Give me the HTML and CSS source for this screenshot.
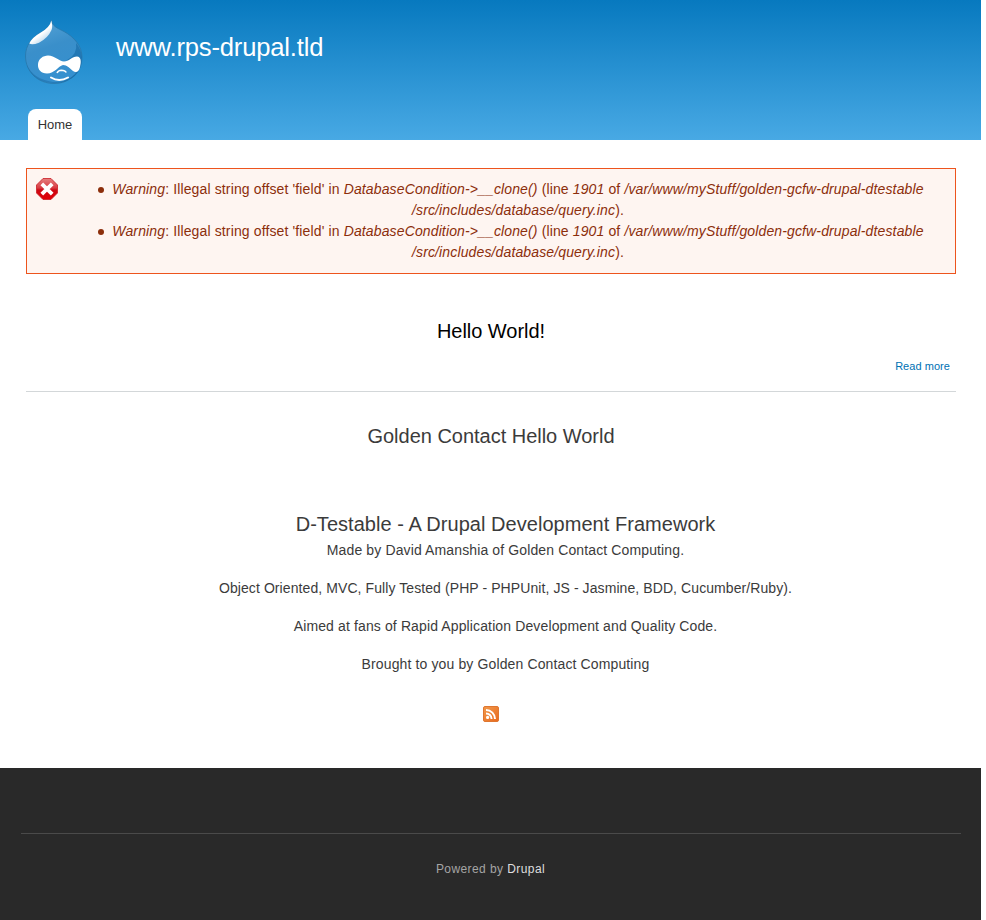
FILE: index.html
```html
<!DOCTYPE html>
<html lang="en">
<head>
<meta charset="utf-8">
<title>www.rps-drupal.tld</title>
<link rel="stylesheet" href="styles.css">
</head>
<body>
<div class="page">
  <header class="header">
    <div class="branding">
      <svg class="logo" viewBox="0 0 60 68" width="60" height="68">
        <defs>
          <linearGradient id="drop" x1="0" y1="0" x2="0.3" y2="1">
            <stop offset="0" stop-color="#5aa6d8"/><stop offset=".5" stop-color="#3a8fca"/><stop offset="1" stop-color="#3590cf"/>
          </linearGradient>
          <linearGradient id="shine" x1="0" y1="0" x2=".75" y2="1">
            <stop offset="0" stop-color="#fff"/><stop offset=".6" stop-color="#fff"/><stop offset="1" stop-color="#fff" stop-opacity=".5"/>
          </linearGradient>
        </defs>
        <path d="M27.500 2C28 8 33 10 40 13.500C50 19 58 28 58 39C58 54 46 65.500 30 65.500C14 65.500 1.500 54 1.500 38C1.500 27 8 20 16 15C23 11 27 8 27.500 2Z" fill="url(#drop)" stroke="#2877ab" stroke-width=".8"/>
        <path d="M52 25Q54 36 43 42Q52 48 55 51Q47 64 31 65Q58 63 58 39Q57 31 52 25Z" fill="#176ca8" opacity=".65"/>
        <path d="M3 47Q9 61 29 64Q47 64 55 51Q47 66 29 65Q9 64 3 47Z" fill="#17679f" opacity=".45"/>
        <path d="M27.300 2.500Q26 9.500 16 15Q8 19.500 5.300 25.500Q8 27.500 15 24.700Q24 20 27.500 12Q29 9 27.300 2.500Z" fill="url(#shine)"/>
        <path d="M24 37.500C31 37.500 35 43.500 40 43.500C45 43.500 48 38.500 53 38.500C57 39 57.500 43 56 49C55 54 52 55 49 53C46 50.500 43 47 39 47C34 48 31 55.500 23 55.500C17 55.500 13.500 51.500 14 46C14.500 41 19 37.500 24 37.500Z" fill="#fff"/>
        <path d="M33 55Q34 52.300 37.500 52.200Q41 52.200 42.300 54.500" fill="none" stroke="#fff" stroke-width="1.500"/>
        <path d="M27 59.500Q35 64.500 44 59.500" fill="none" stroke="#fff" stroke-width="2" stroke-linecap="round"/>
      </svg>
      <a class="site-name">www.rps-drupal.tld</a>
    </div>
    <nav class="menu"><a class="tab">Home</a></nav>
  </header>
  <main class="main">
    <div class="messages">
      <svg class="error-icon" viewBox="0 0 22 22" width="22" height="22">
        <defs><linearGradient id="err" x1="0" y1="0" x2="0" y2="1"><stop offset="0" stop-color="#e58080"/><stop offset=".45" stop-color="#d83b42"/><stop offset=".55" stop-color="#cc0813"/><stop offset="1" stop-color="#e30008"/></linearGradient></defs>
        <path d="M7 .5H15L21.500 7V15L15 21.500H7L.5 15V7Z" fill="url(#err)" stroke="#c91c24" stroke-width=".8"/>
        <path d="M5.800 5.800L16.200 16.200M16.200 5.800L5.800 16.200" stroke="#fff" stroke-width="3.800"/>
      </svg>
      <ul class="warnings">
        <li><em>Warning</em>: Illegal string offset 'field' in <em>DatabaseCondition-&gt;__clone()</em> (line <em>1901</em> of <em>/var/www/myStuff/golden-gcfw-drupal-dtestable<br>/src/includes/database/query.inc</em>).</li>
        <li><em>Warning</em>: Illegal string offset 'field' in <em>DatabaseCondition-&gt;__clone()</em> (line <em>1901</em> of <em>/var/www/myStuff/golden-gcfw-drupal-dtestable<br>/src/includes/database/query.inc</em>).</li>
      </ul>
    </div>
    <article class="node">
      <h2 class="node-title">Hello World!</h2>
      <div class="links"><a class="more">Read more</a></div>
    </article>
    <h2 class="subtitle">Golden Contact Hello World</h2>
    <section class="about">
      <h2 class="about-title">D-Testable - A Drupal Development Framework</h2>
      <p>Made by David Amanshia of Golden Contact Computing.</p>
      <p class="features">Object Oriented, MVC, Fully Tested (PHP - PHPUnit, JS - Jasmine, BDD, Cucumber/Ruby).</p>
      <p>Aimed at fans of Rapid Application Development and Quality Code.</p>
      <p>Brought to you by Golden Contact Computing</p>
    </section>
    <svg class="feed" viewBox="0 0 16 16" width="16" height="16">
      <defs><linearGradient id="rss" x1="0" y1="0" x2="1" y2="1"><stop offset="0" stop-color="#f19a4b"/><stop offset="1" stop-color="#e9691d"/></linearGradient></defs>
      <rect x=".5" y=".5" width="15" height="15" rx="1.500" fill="url(#rss)" stroke="#df7630"/>
      <circle cx="4.600" cy="11.400" r="1.600" fill="#fff"/>
      <path d="M3 7.400A5.600 5.600 0 0 1 8.600 13M3 4A9 9 0 0 1 12 13" fill="none" stroke="#fff" stroke-width="2"/>
    </svg>
  </main>
  <footer class="footer">
    <div class="credit">Powered by <a>Drupal</a></div>
  </footer>
</div>
</body>
</html>
```
FILE: styles.css
```css
* { box-sizing: border-box; }
body { margin: 0; background: #fff; color: #3b3b3b; font: 14px/21px "Liberation Sans", Arial, sans-serif; }
h2, p, ul { margin: 0; padding: 0; font-weight: normal; }
.page { width: 981px; height: 920px; display: flex; flex-direction: column; overflow: hidden; }
.header { height: 140px; display: flex; flex-direction: column; justify-content: space-between; background: linear-gradient(#0779bf, #48a9e4); }
.branding { display: flex; padding: 18px 0 0 24px; }
.logo { display: block; }
.site-name { margin: 14px 0 0 32px; color: #fff; font-size: 25.600px; line-height: 30px; letter-spacing: -.18px; }
.menu { display: flex; padding-left: 28px; }
.tab { width: 54px; height: 31px; border-radius: 8px 8px 0 0; background: #fff; color: #333; font-size: 13px; line-height: 31px; text-align: center; }
.main { height: 628px; padding: 28px 25px 0 26px; display: flex; flex-direction: column; text-align: center; }
.messages { display: flex; height: 106px; border: 1px solid #ed541d; background: #fef5f1; color: #8c2e0b; padding: 9px; }
.error-icon { flex: none; }
.warnings { width: 812px; margin: 1px 0 0 54px; list-style: none; letter-spacing: .13px; white-space: nowrap; }
.warnings li { position: relative; }
.warnings li::before { content: ""; position: absolute; left: -14px; top: 8px; width: 6px; height: 6px; border-radius: 50%; background: #8c2e0b; }
.node { height: 118px; border-bottom: 1px solid #d3d7d9; padding-top: 45px; }
.node-title { font-size: 20px; line-height: 25px; letter-spacing: -.04px; color: #000; }
.links { margin-top: 12px; padding-right: 6px; text-align: right; font-size: 11px; line-height: 20px; letter-spacing: .05px; color: #0071b3; }
.subtitle { margin-top: 32px; font-size: 20px; line-height: 25px; letter-spacing: -.02px; }
.about { margin: 63px 0 0 29px; }
.about-title { font-size: 20px; line-height: 25px; letter-spacing: .04px; }
.about p { margin-bottom: 17px; line-height: 21px; letter-spacing: .125px; }
.about .features { letter-spacing: .085px; }
.about-title + p { margin-top: 3px; }
.feed { align-self: center; margin-top: 14px; }
.footer { height: 152px; background: #292929; padding: 65px 20px 0 21px; }
.credit { border-top: 1px solid #4a4a4a; padding: 25px 1px 0 0; text-align: center; font-size: 12px; line-height: 20px; letter-spacing: .42px; color: #a5a5a5; }
.credit a { color: #dedede; }
```
